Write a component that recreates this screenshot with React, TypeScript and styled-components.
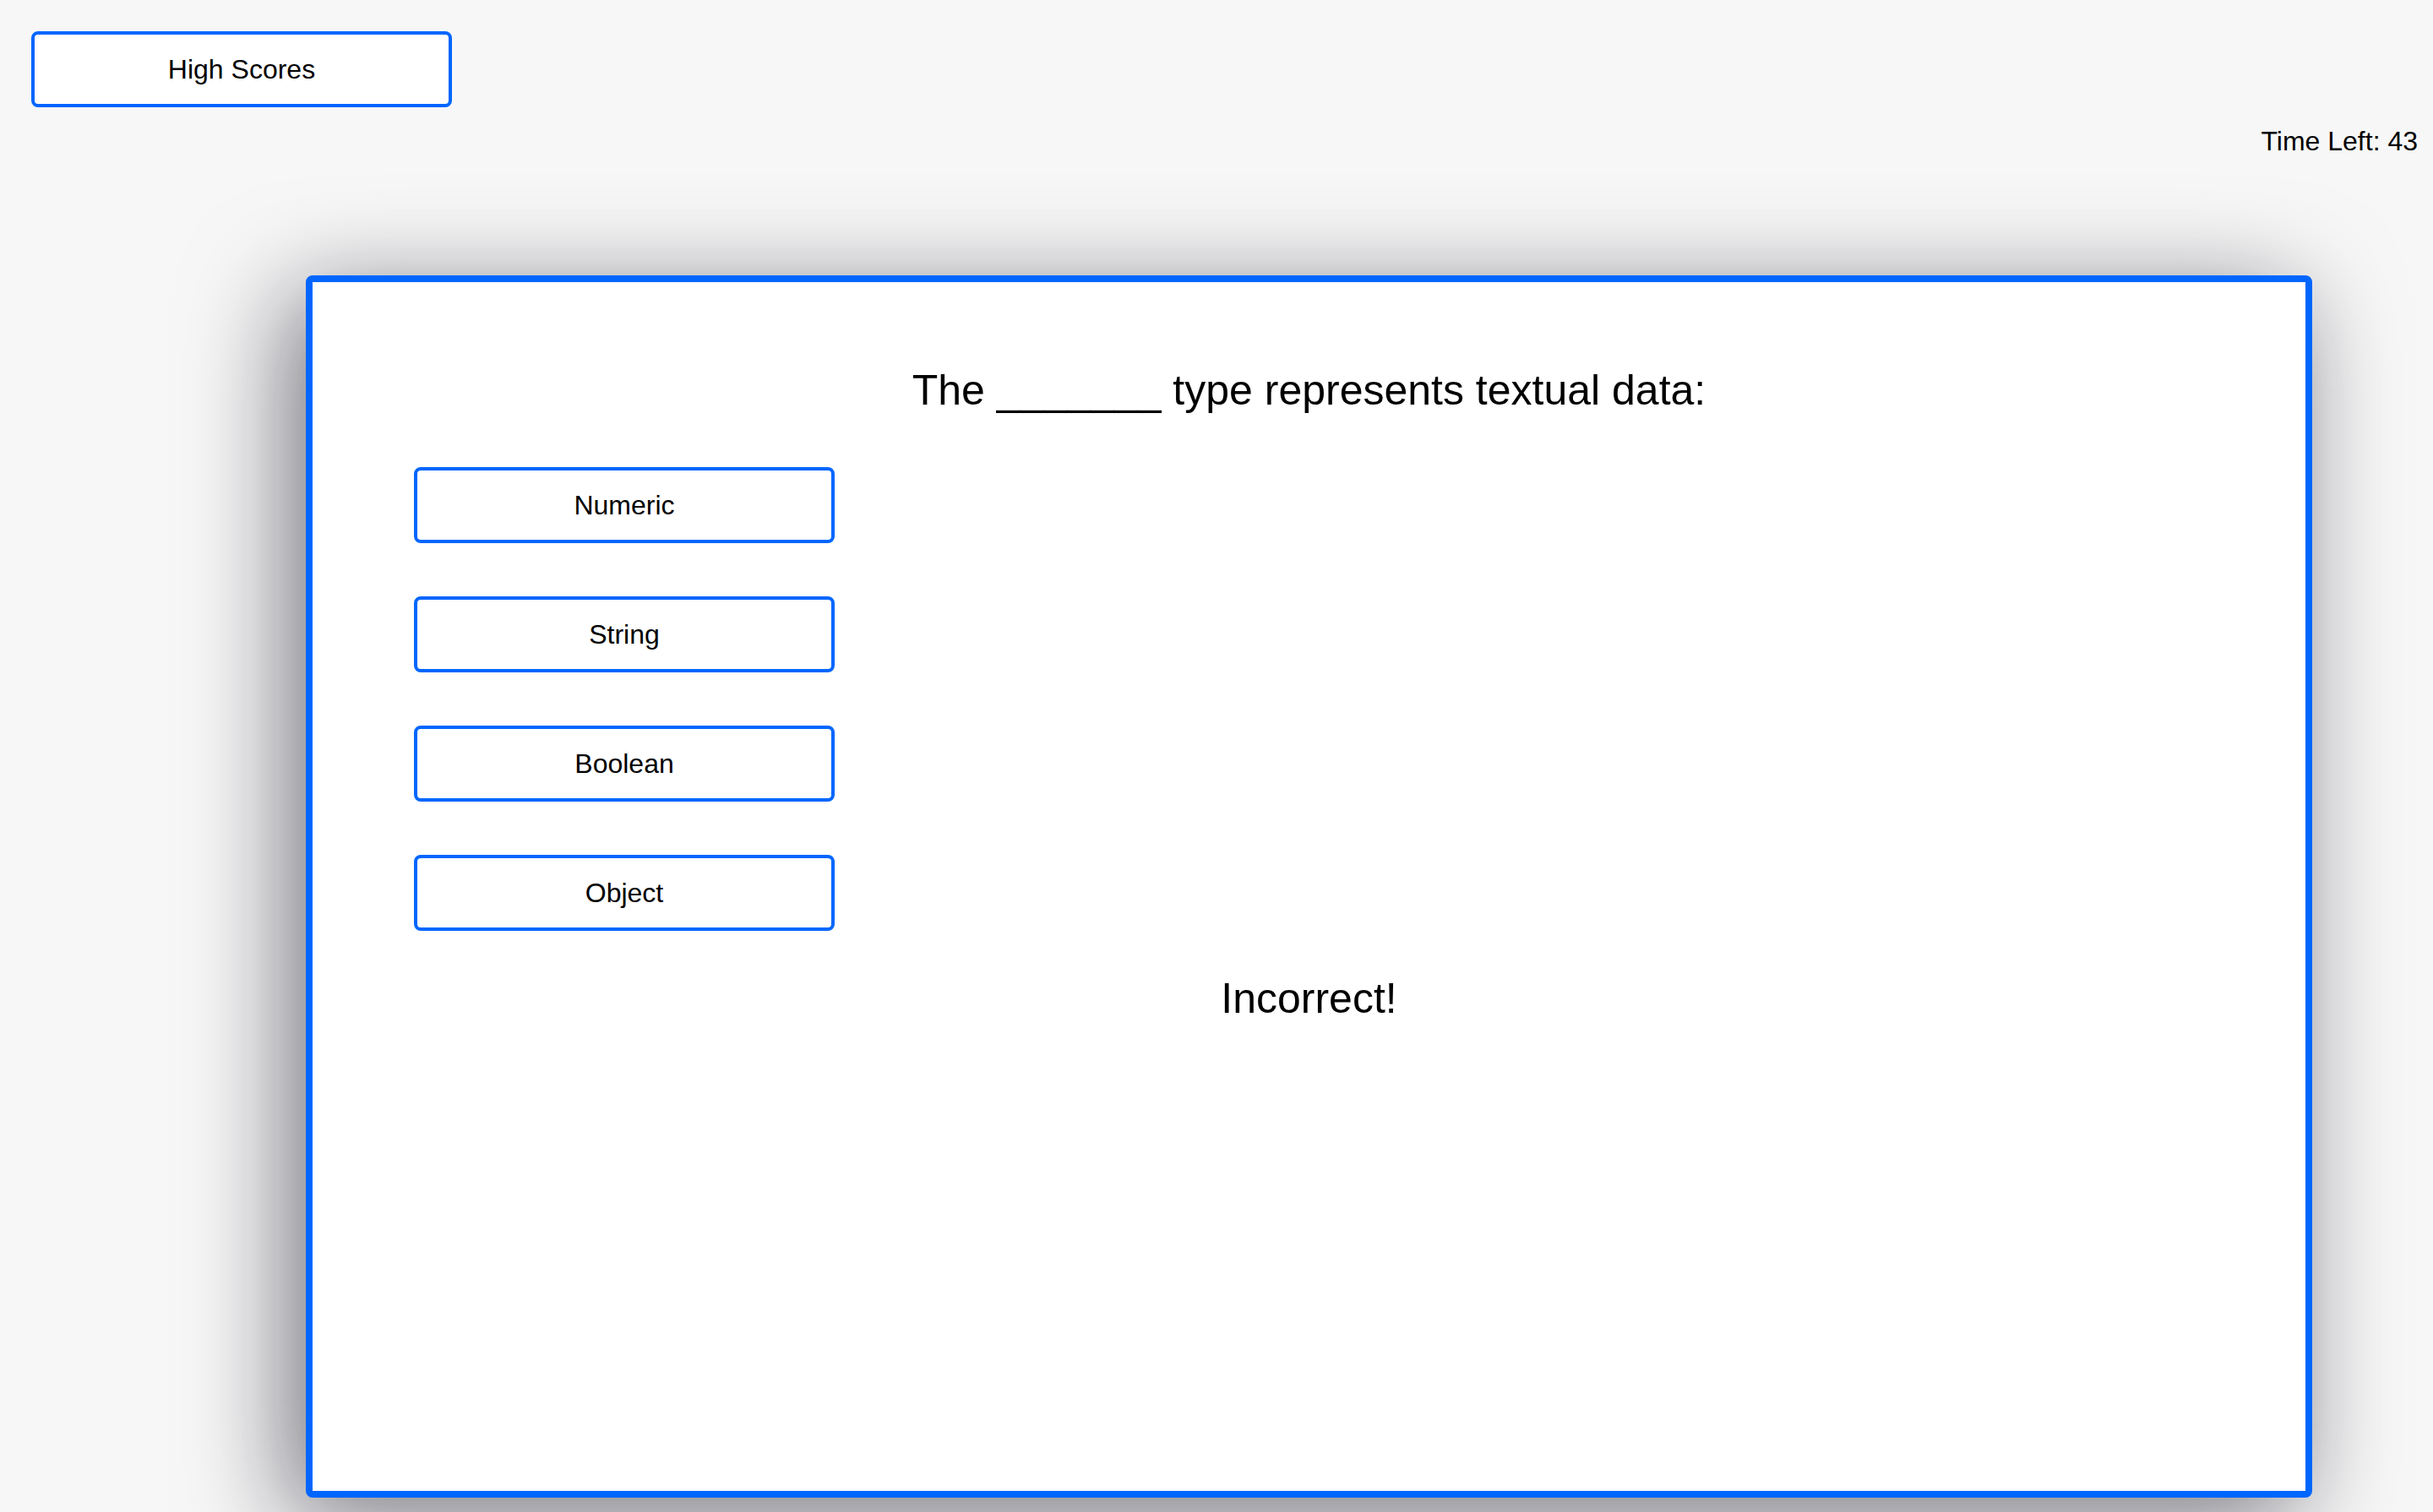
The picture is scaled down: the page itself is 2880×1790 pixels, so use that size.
import styled, { createGlobalStyle } from "styled-components";

const answers = ["Numeric", "String", "Boolean", "Object"];

const GlobalStyle = createGlobalStyle`
	html,
	body {
		margin: 0;
		padding: 0;
		background: #f7f7f7;
		font-family: "Liberation Sans", Arial, Helvetica, sans-serif;
		color: #000;
	}
`;

const App = () => {
	return (
		<>
			<GlobalStyle />
			<Page>
				<Header>
					<ScoresButton>High Scores</ScoresButton>
					<Timer>Time Left: 43</Timer>
				</Header>
				<QuizCard>
					<Question>The _______ type represents textual data:</Question>
					<AnswerList>
						{answers.map((answer) => (
							<AnswerButton key={answer}>{answer}</AnswerButton>
						))}
					</AnswerList>
					<Feedback>Incorrect!</Feedback>
				</QuizCard>
			</Page>
		</>
	);
};

export default App;

const Page = styled.div`
	display: flex;
	flex-direction: column;
	width: 2880px;
	height: 1790px;
	overflow: hidden;
`;

const Header = styled.div`
	display: flex;
	justify-content: space-between;
	align-items: flex-start;
	flex-shrink: 0;
	padding: 37px 18px 0 37px;
	height: 326px;
	box-sizing: border-box;
`;

const ScoresButton = styled.button`
	width: 498px;
	height: 90px;
	border: 4px solid #0066ff;
	border-radius: 8px;
	background: #ffffff;
	font-family: inherit;
	font-size: 32px;
	color: #000;
	cursor: pointer;
`;

const Timer = styled.div`
	margin-top: 112px;
	font-size: 32px;
	line-height: 37px;
`;

const QuizCard = styled.div`
	display: flex;
	flex-direction: column;
	flex-shrink: 0;
	margin-left: 362px;
	width: 2375px;
	height: 1447px;
	box-sizing: border-box;
	padding: 99px 0 0 120px;
	border: 8px solid #0066ff;
	border-radius: 8px;
	background: #ffffff;
	box-shadow: -20px 24px 120px rgba(10, 10, 25, 0.55);
`;

const Question = styled.div`
	margin-left: -120px;
	text-align: center;
	font-size: 50px;
	line-height: 58px;
`;

const AnswerList = styled.div`
	display: flex;
	flex-direction: column;
	gap: 63px;
	margin-top: 62px;
`;

const AnswerButton = styled.button`
	width: 498px;
	height: 90px;
	border: 4px solid #0066ff;
	border-radius: 8px;
	background: #ffffff;
	font-family: inherit;
	font-size: 32px;
	color: #000;
	cursor: pointer;
`;

const Feedback = styled.div`
	margin: 52px 0 0 -120px;
	text-align: center;
	font-size: 50px;
	line-height: 56px;
`;
